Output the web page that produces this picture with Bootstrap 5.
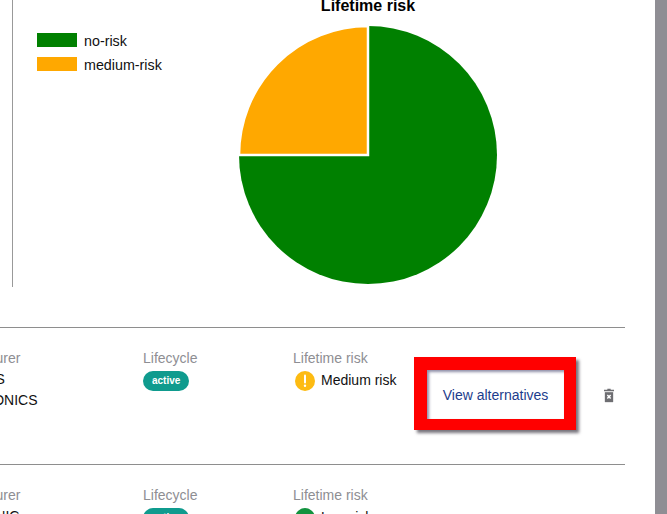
<!DOCTYPE html>
<html lang="en">
<head>
<meta charset="utf-8">
<title>Lifetime risk</title>
<link href="https://cdn.jsdelivr.net/npm/bootstrap@5.3.0/dist/css/bootstrap.min.css" rel="stylesheet">
<style>
html,body{height:514px;overflow:hidden}
body{font-family:"Liberation Sans",Arial,sans-serif;font-size:14px;color:#111;background:#fff}
.page-main{width:655px;height:514px;overflow:hidden;flex:none}
.page-track{width:12px;height:514px;background:#8f8e94;flex:none}
.chart-zone{height:327px}
.legend-pane{margin-left:12px;width:186px;height:287px;border-left:1px solid #999;padding:33px 0 0 24px}
.swatch{width:40px;height:14px;flex:none}
.swatch-green{background:#008000}
.swatch-orange{background:#ffa800}
.legend-row{height:14px;margin-bottom:10px;font-size:14.300px}
.legend-row span:last-child{margin-left:7px;padding-top:4px}
.pie-pane{width:260px;margin-left:40px}
.pie-title{font-size:16px;font-weight:700;line-height:18px;margin:-3px 0 11px;color:#000;text-align:center}
.pie-pane svg{display:block;margin-left:1px}
.part-row{width:687px;margin-left:-62px;height:137px;border-top:1px solid #8e8e8e;padding-top:22px}
.cell-maker{width:205px}
.cell-life{width:150px}
.cell-risk{width:121px}
.cell-label{color:#8e8e93;line-height:17px;margin-bottom:2px}
.cell-text{line-height:21px}
.life-pill{background:#0f9b8e;font-size:10px;font-weight:700;line-height:20px;padding:0 9px;height:20px;border-radius:10px;display:inline-block;color:#fff}
.risk-row{margin-top:2px}
.risk-dot{width:20px;height:20px;flex:none;margin:2px 6px 0 2px}
.alt-box{width:162px;height:73px;margin-top:7px;margin-left:0;border:13px solid #f00;border-right-width:12px;border-bottom-width:11px;border-radius:0;background:#fff;color:#1c3c8c;font-size:14px;padding:1px 0 0;box-shadow:3px 3px 3px #77747c,inset 2px 2px 3px #8f8fa8}
.bin-icon{margin:38px 0 0 28px;width:10px;height:15px;flex:none}
</style>
</head>
<body class="d-flex">
<div class="page-main">
  <section class="chart-zone d-flex">
    <div class="legend-pane">
      <div class="legend-row d-flex align-items-center"><span class="swatch swatch-green"></span><span>no-risk</span></div>
      <div class="legend-row d-flex align-items-center"><span class="swatch swatch-orange"></span><span>medium-risk</span></div>
    </div>
    <div class="pie-pane">
      <div class="pie-title">Lifetime risk</div>
      <svg width="259" height="259" viewBox="0 0 259 259" aria-label="Lifetime risk pie chart">
        <circle cx="129" cy="129" r="129" fill="#008000"/>
        <path d="M129 129V0A129 129 0 0 0 0 129Z" fill="#ffa800" stroke="#fff" stroke-width="2.500"/>
      </svg>
    </div>
  </section>

  <section class="part-row d-flex">
    <div class="cell-maker">
      <div class="cell-label">Manufacturer</div>
      <div class="cell-text">RENESAS</div>
      <div class="cell-text">ELECTRONICS</div>
    </div>
    <div class="cell-life">
      <div class="cell-label">Lifecycle</div>
      <span class="life-pill">active</span>
    </div>
    <div class="cell-risk">
      <div class="cell-label">Lifetime risk</div>
      <div class="risk-row d-flex align-items-center">
        <svg class="risk-dot" viewBox="0 0 20 20"><circle cx="10" cy="10" r="10" fill="#fdbb12"/><path d="M10 4.500v7" stroke="#fff" stroke-width="2" stroke-linecap="round"/><circle cx="10" cy="14.800" r="1.200" fill="#fff"/></svg>
        <span>Medium risk</span>
      </div>
    </div>
    <button type="button" class="btn alt-box">View alternatives</button>
    <svg class="bin-icon" viewBox="0 0 12 16"><path d="M4 0h4v1.200h4V3H0V1.200h4Z" fill="#6e6e72"/><path d="M1 4h10v12H1Z" fill="#6e6e72"/><path d="M4 7.500l4 4M8 7.500l-4 4" stroke="#fff" stroke-width="1.800"/></svg>
  </section>

  <section class="part-row d-flex">
    <div class="cell-maker">
      <div class="cell-label">Manufacturer</div>
      <div class="cell-text">PANASONIC</div>
    </div>
    <div class="cell-life">
      <div class="cell-label">Lifecycle</div>
      <span class="life-pill">active</span>
    </div>
    <div class="cell-risk">
      <div class="cell-label">Lifetime risk</div>
      <div class="risk-row d-flex align-items-center">
        <svg class="risk-dot" viewBox="0 0 20 20"><circle cx="10" cy="10" r="10" fill="#12933f"/><path d="M5.500 10l3 3 6-6" stroke="#fff" stroke-width="2" fill="none"/></svg>
        <span>Low risk</span>
      </div>
    </div>
  </section>
</div>
<div class="page-track"></div>
<script src="https://cdn.jsdelivr.net/npm/bootstrap@5.3.0/dist/js/bootstrap.bundle.min.js"></script>
</body>
</html>
